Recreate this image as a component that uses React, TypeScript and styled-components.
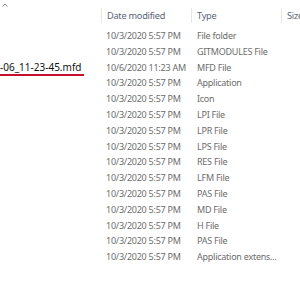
import React from 'react';
import styled, { createGlobalStyle } from 'styled-components';

const GlobalStyle = createGlobalStyle`
  html, body {
    margin: 0;
    padding: 0;
    background: #fff;
  }
  body {
    font-family: "Noto Sans", "Open Sans", sans-serif;
    overflow: hidden;
  }
`;

const Window = styled.div`
  width: 300px;
  height: 300px;
  overflow: hidden;
  background: #fff;
`;

const Columns = `101px 90px 90px 19px`;

const Header = styled.div`
  display: grid;
  grid-template-columns: ${Columns};
  height: 28px;
`;

const HeaderCell = styled.div<{ first?: boolean }>`
  padding-top: ${props => (props.first ? '3px' : '8px')};
  padding-left: ${props => (props.first ? '2px' : '0')};
  box-sizing: border-box;
  overflow: hidden;
`;

const HeaderLabel = styled.div`
  height: 15px;
  line-height: 15px;
  border-left: 1px solid #e5e5e5;
  padding-left: 5px;
  font-size: 9.2px;
  letter-spacing: -0.25px;
  color: #5a6576;
  white-space: nowrap;
`;

const SortArrow = styled.svg`
  display: block;
  width: 6px;
  height: 4px;
`;

const List = styled.div`
  display: flex;
  flex-direction: column;
`;

const Row = styled.div`
  display: grid;
  grid-template-columns: ${Columns};
  height: 15.8px;
  align-items: center;
`;

const NameCell = styled.div`
  height: 15.8px;
  white-space: nowrap;
  overflow: visible;
`;

const FileName = styled.div`
  display: inline-block;
  vertical-align: top;
  margin-top: 1px;
  font-size: 10px;
  color: #111;
  line-height: 13px;
  border-bottom: 2px solid #c8102e;
  padding-right: 3px;
`;

const Cell = styled.div<{ pad?: number }>`
  padding-left: ${props => props.pad ?? 6}px;
  font-size: 9px;
  letter-spacing: -0.25px;
  line-height: 15.8px;
  color: #6d6d6d;
  white-space: nowrap;
  overflow: hidden;
`;

type FileRow = { name?: string; date: string; type: string };

const rows: FileRow[] = [
  { date: '10/3/2020 5:57 PM', type: 'File folder' },
  { date: '10/3/2020 5:57 PM', type: 'GITMODULES File' },
  { name: '-06_11-23-45.mfd', date: '10/6/2020 11:23 AM', type: 'MFD File' },
  { date: '10/3/2020 5:57 PM', type: 'Application' },
  { date: '10/3/2020 5:57 PM', type: 'Icon' },
  { date: '10/3/2020 5:57 PM', type: 'LPI File' },
  { date: '10/3/2020 5:57 PM', type: 'LPR File' },
  { date: '10/3/2020 5:57 PM', type: 'LPS File' },
  { date: '10/3/2020 5:57 PM', type: 'RES File' },
  { date: '10/3/2020 5:57 PM', type: 'LFM File' },
  { date: '10/3/2020 5:57 PM', type: 'PAS File' },
  { date: '10/3/2020 5:57 PM', type: 'MD File' },
  { date: '10/3/2020 5:57 PM', type: 'H File' },
  { date: '10/3/2020 5:57 PM', type: 'PAS File' },
  { date: '10/3/2020 5:57 PM', type: 'Application extens...' },
];

export default function App() {
  return (
    <Window>
      <GlobalStyle />
      <Header>
        <HeaderCell first>
          <SortArrow viewBox="0 0 6 4">
            <path d="M0.5 3.5 L3 1 L5.5 3.5" fill="none" stroke="#8a8a8a" strokeWidth="1" />
          </SortArrow>
        </HeaderCell>
        <HeaderCell>
          <HeaderLabel>Date modified</HeaderLabel>
        </HeaderCell>
        <HeaderCell>
          <HeaderLabel>Type</HeaderLabel>
        </HeaderCell>
        <HeaderCell>
          <HeaderLabel>Size</HeaderLabel>
        </HeaderCell>
      </Header>
      <List>
        {rows.map((r, i) => (
          <Row key={i}>
            <NameCell>{r.name && <FileName>{r.name}</FileName>}</NameCell>
            <Cell pad={5}>{r.date}</Cell>
            <Cell>{r.type}</Cell>
            <Cell />
          </Row>
        ))}
      </List>
    </Window>
  );
}
